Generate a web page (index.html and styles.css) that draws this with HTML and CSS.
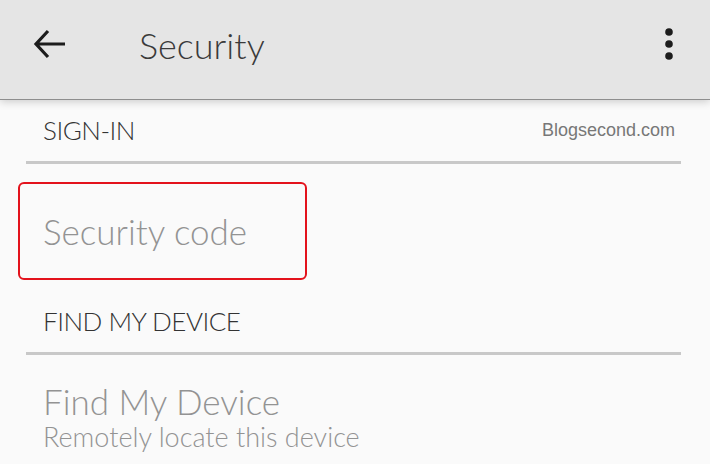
FILE: index.html
```html
<!DOCTYPE html>
<html lang="en">
<head>
    <meta charset="UTF-8">
    <meta name="viewport" content="width=device-width, initial-scale=1.0">
    <title>Security</title>
    <link rel="stylesheet" href="styles.css">
</head>
<body>
    <header class="appbar">
        <svg class="back" width="34" height="34" viewBox="0 0 34 34">
            <path d="M32 17H4M15 4L3 17l12 13" fill="none" stroke="#1c1c1c" stroke-width="3.2"/>
        </svg>
        <h1 class="title">Security</h1>
        <svg class="more" width="10" height="34" viewBox="0 0 10 34">
            <circle cx="5" cy="5" r="3.8" fill="#1c1c1c"/>
            <circle cx="5" cy="17" r="3.8" fill="#1c1c1c"/>
            <circle cx="5" cy="29" r="3.8" fill="#1c1c1c"/>
        </svg>
    </header>

    <main class="list">
        <div class="category">
            <span>SIGN-IN</span>
            <span class="watermark">Blogsecond.com</span>
        </div>
        <div class="item item-marked">
            <div class="item-title">Security code</div>
        </div>

        <div class="category">
            <span>FIND MY DEVICE</span>
        </div>
        <div class="item">
            <div class="item-title">Find My Device</div>
            <div class="item-sub">Remotely locate this device</div>
        </div>
    </main>
</body>
</html>
```

FILE: styles.css
```css
body {
    margin: 0;
    background: #fafafa;
    font-family: Lato, "Open Sans", sans-serif;
    font-weight: 300;
    overflow: hidden;
}
.appbar {
    height: 100px;
    background: #e5e5e5;
    border-bottom: 1px solid #8e8e8e;
    box-shadow: 0 2px 8px rgba(0, 0, 0, 0.18);
    display: flex;
    align-items: center;
    padding: 0 36px 0 33px;
    box-sizing: border-box;
    position: relative;
}
.back {
    margin-top: -12px;
}
.title {
    flex: 1;
    margin: -10px 0 0 72px;
    font-size: 36px;
    font-weight: 300;
    color: #3a3a3a;
}
.more {
    margin-top: -12px;
}
.list {
    padding: 0 29px 0 26px;
}
.category {
    display: flex;
    justify-content: space-between;
    align-items: center;
    height: 64px;
    padding: 0 6px 2px 17px;
    border-bottom: 3px solid #c8c8c8;
    font-size: 26px;
    letter-spacing: -0.5px;
    color: #333;
    box-sizing: border-box;
}
.watermark {
    font-family: "Liberation Sans", Arial, sans-serif;
    font-weight: 400;
    font-size: 18px;
    letter-spacing: 0;
    color: #777;
    padding-top: 2px;
}
.item {
    padding: 26px 0 0 17px;
}
.item-marked {
    width: 289px;
    height: 98px;
    box-sizing: border-box;
    margin: 18px 0 11px -8px;
    padding: 0 0 0 23px;
    border: 2px solid #e3121c;
    border-radius: 6px;
    display: flex;
    align-items: center;
}
.item-title {
    font-size: 35px;
    color: #939393;
    line-height: 40px;
}
.item-sub {
    font-size: 27px;
    color: #939393;
    line-height: 32px;
}
```
